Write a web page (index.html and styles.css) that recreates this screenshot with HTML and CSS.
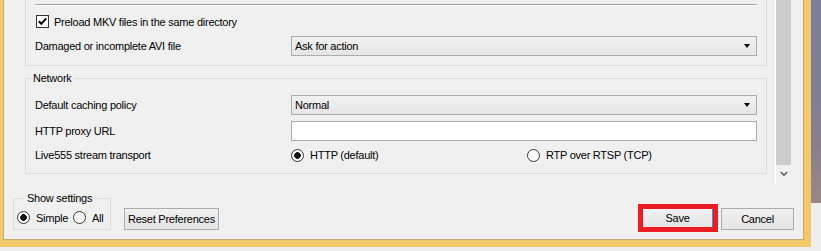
FILE: index.html
```html
<!DOCTYPE html>
<html lang="en">
<head>
  <meta charset="UTF-8" />
  <title>Preferences</title>
  <link rel="stylesheet" href="styles.css">
</head>
<body>
  <div class="screen">
    <div class="window">
      <div class="frame">
        <div class="main">
          <div class="content">
            <div class="group group-cut">
              <div class="separator"></div>
              <div class="check-row">
                <span class="checkbox">
                  <svg width="11" height="11" viewBox="0 0 11 11"><path d="M1.8 5.2 L4.3 7.8 L9.2 2.3" fill="none" stroke="#000" stroke-width="2"/></svg>
                </span>
                Preload MKV files in the same directory
              </div>
              <div class="form form-single">
                <span>Damaged or incomplete AVI file</span>
                <div class="combo">Ask for action<span class="arrow-down"></span></div>
              </div>
            </div>

            <div class="group group-net">
              <span class="group-title">Network</span>
              <div class="form form-net">
                <span>Default caching policy</span>
                <div class="combo">Normal<span class="arrow-down"></span></div>

                <span>HTTP proxy URL</span>
                <div class="textbox"></div>

                <span>Live555 stream transport</span>
                <div class="radios">
                  <div class="opt"><span class="radio on"></span>HTTP (default)</div>
                  <div class="opt"><span class="radio"></span>RTP over RTSP (TCP)</div>
                </div>
              </div>
            </div>
          </div>

          <div class="scrollbar">
            <div class="thumb"></div>
            <div class="scroll-btn">
              <svg width="8" height="6" viewBox="0 0 8 6"><path d="M0.8 1 L4 4.2 L7.2 1" fill="none" stroke="#606060" stroke-width="1.6"/></svg>
            </div>
          </div>
        </div>

        <div class="footer">
          <div class="show-settings">
            <span class="group-title">Show settings</span>
            <div class="settings-opts">
              <div class="opt opt-simple"><span class="radio on"></span>Simple</div>
              <div class="opt"><span class="radio"></span>All</div>
            </div>
          </div>
          <div class="btn btn-reset">Reset Preferences</div>
          <div class="highlight">
            <div class="btn btn-save">Save</div>
          </div>
          <div class="btn btn-cancel">Cancel</div>
        </div>
      </div>
    </div>
    <div class="photo"></div>
  </div>
</body>
</html>
```

FILE: styles.css
```css
* {
  box-sizing: border-box;
}
body {
  margin: 0;
  background: #eeeeee;
  font-family: "Liberation Sans", Arial, sans-serif;
  font-size: 11px;
  letter-spacing: -0.25px;
  color: #000;
}
.screen {
  display: flex;
  align-items: flex-start;
}
.window {
  width: 811px;
  height: 247px;
  background: #f1c96b;
  padding: 0 7px 7px 3px;
}
.frame {
  height: 240px;
  border: 1px solid #c9a96e;
  border-top: 0;
  background: #f0f0f0;
  display: flex;
  flex-direction: column;
}
.photo {
  width: 10px;
  height: 203px;
  background: linear-gradient(#7b7f97, #7e8095 45%, #8a7f8a 75%, #988886);
}

/* scroll area */
.main {
  display: flex;
  height: 184px;
  margin-right: 12px;
}
.content {
  flex: 1;
  border-right: 1px solid #fff;
  padding: 0 8px 0 21px;
}
.scrollbar {
  width: 15px;
  display: flex;
  flex-direction: column;
}
.thumb {
  height: 165px;
  background: #cdcdcd;
}
.scroll-btn {
  height: 18px;
  display: flex;
  justify-content: center;
  align-items: center;
}

/* group boxes */
.group {
  border: 1px solid #dcdcdc;
  padding: 0 9px;
}
.group-cut {
  border-top: 0;
  height: 66px;
  padding-top: 4px;
}
.group-net {
  margin-top: 12px;
  height: 96px;
}
.group-title {
  display: block;
  width: max-content;
  height: 13px;
  line-height: 13px;
  margin-top: -7px;
  padding: 0 2px;
  background: #f0f0f0;
}
.group-net .group-title {
  margin-left: -4px;
}
.separator {
  border-top: 1px solid #a0a0a0;
  border-bottom: 1px solid #fff;
}
.check-row {
  margin-top: 9px;
  height: 13px;
  display: flex;
  align-items: center;
  gap: 5px;
  padding-left: 1px;
}
.checkbox {
  width: 13px;
  height: 13px;
  border: 1px solid #333;
  background: #fff;
  display: flex;
}
.form {
  display: grid;
  grid-template-columns: 256px 1fr;
  grid-auto-rows: 20px;
  row-gap: 6px;
  align-items: center;
  margin-top: 8px;
}
.form-net {
  margin-top: 10px;
  grid-template-rows: 20px 20px 16px;
}
.combo {
  height: 20px;
  border: 1px solid #acacac;
  background: linear-gradient(#f2f2f2, #e5e5e5);
  display: flex;
  align-items: center;
  justify-content: space-between;
  padding: 0 6px 0 3px;
}
.arrow-down {
  width: 0;
  height: 0;
  border-left: 3.5px solid transparent;
  border-right: 3.5px solid transparent;
  border-top: 4px solid #000;
}
.textbox {
  height: 20px;
  border: 1px solid #acacac;
  background: #fff;
}
.radios {
  display: grid;
  grid-template-columns: 236px 1fr;
}
.opt {
  display: flex;
  align-items: center;
  gap: 6px;
}
.radio {
  width: 13px;
  height: 13px;
  border: 1px solid #333;
  border-radius: 50%;
  background: #fff;
  flex: none;
}
.radio.on {
  background: radial-gradient(circle, #111 0 3px, #fff 3.6px);
}

/* bottom bar */
.footer {
  flex: 1;
  display: flex;
  align-items: flex-start;
  padding: 0 9px;
}
.show-settings {
  margin-top: 14px;
  width: 98px;
  height: 32px;
  border: 1px solid #dcdcdc;
  padding-left: 3px;
}
.show-settings .group-title {
  margin-left: 8px;
}
.settings-opts {
  display: flex;
  margin-top: 6px;
}
.opt-simple {
  width: 56px;
}
.btn {
  height: 22px;
  border: 1px solid #acacac;
  background: linear-gradient(#f0f0f0, #e5e5e5);
  display: flex;
  align-items: center;
  justify-content: center;
}
.btn-reset {
  margin: 24px 0 0 13px;
  width: 95px;
}
.highlight {
  margin: 20px 0 0 auto;
  width: 80px;
  height: 28px;
  border: 5px solid #ec1c24;
}
.btn-save {
  height: 18px;
  border: 0;
  border-right: 1px solid #3c8fe0;
}
.btn-cancel {
  margin: 24px 0 0 3px;
  width: 73px;
}
```
